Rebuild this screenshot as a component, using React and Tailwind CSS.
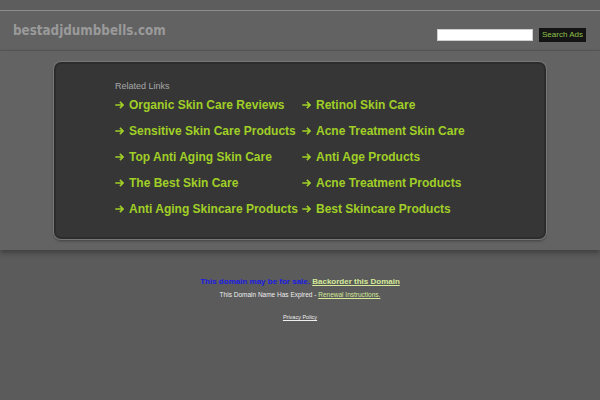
import React from "react";

const left = [
  "Organic Skin Care Reviews",
  "Sensitive Skin Care Products",
  "Top Anti Aging Skin Care",
  "The Best Skin Care",
  "Anti Aging Skincare Products",
];
const right = [
  "Retinol Skin Care",
  "Acne Treatment Skin Care",
  "Anti Age Products",
  "Acne Treatment Products",
  "Best Skincare Products",
];

function Arrow() {
  return (
    <svg width="9" height="8" viewBox="0 0 9 8" className="shrink-0">
      <path d="M0.3 4H7.8M4.9 0.9L8 4L4.9 7.1" fill="none" stroke="#a0cf26" strokeWidth="1.6" />
    </svg>
  );
}

function LinkItem({ text }) {
  return (
    <div className="flex items-center h-[26px]">
      <Arrow />
      <span className="ml-[5px] text-[12px] font-bold text-[#a0cf26] whitespace-nowrap">{text}</span>
    </div>
  );
}

export default function App() {
  return (
    <div className="w-[600px] h-[400px] overflow-hidden bg-[#5b5b5b] font-['Liberation_Sans',Arial,sans-serif]">
      <div className="h-[10px] bg-[#5d5d5d]" />
      <header className="h-[41px] bg-[#626262] border-t border-b border-t-[#8e8e8e] border-b-[#555555] flex justify-between items-start">
        <div className="ml-[13px] mt-[12px] leading-[16px] text-[13.3px] font-bold text-[#9a9a9a] font-['DejaVu_Sans_Condensed','DejaVu_Sans',sans-serif]">
          bestadjdumbbells.com
        </div>
        <div className="mt-[17px] mr-[14px] flex items-center gap-[6px]">
          <div className="w-[96px] h-[12px] bg-white border border-[#d0d0d0]" />
          <div className="w-[47px] h-[14px] bg-[#141414] flex items-center justify-center text-[8px] text-[#8fc04a] leading-none">
            Search Ads
          </div>
        </div>
      </header>
      <main className="h-[199px] bg-[#636363] pt-[11px] shadow-[0_3px_5px_rgba(0,0,0,0.3)] relative">
        <div className="mx-auto w-[492px] h-[177px] rounded-[7px] border-2 border-[#2c2c2c] bg-[#363636] ring-1 ring-[#777777] shadow-[0_2px_3px_rgba(0,0,0,0.35)] pl-[59px] pt-[16px]">
          <div className="text-[9px] leading-[12px] text-[#a8a8a8]">Related Links</div>
          <div className="grid grid-cols-[187px_auto]">
            {left.map((l, i) => (
              <React.Fragment key={i}>
                <LinkItem text={l} />
                <LinkItem text={right[i]} />
              </React.Fragment>
            ))}
          </div>
        </div>
      </main>
      <footer className="pt-[27px] text-center">
        <div className="text-[8px] leading-[10px] font-bold">
          <span className="text-[#1c1ce0]">This domain may be for sale. </span>
          <span className="text-[#d4ea98] underline">Backorder this Domain</span>
        </div>
        <div className="mt-[3px] text-[6.5px] leading-[9px] text-[#eeeeee]">
          This Domain Name Has Expired - <span className="text-[#d4ea98] underline">Renewal Instructions.</span>
        </div>
        <div className="mt-[15px] text-[5.5px] leading-[7px] text-[#eeeeee] underline">Privacy Policy</div>
      </footer>
    </div>
  );
}
